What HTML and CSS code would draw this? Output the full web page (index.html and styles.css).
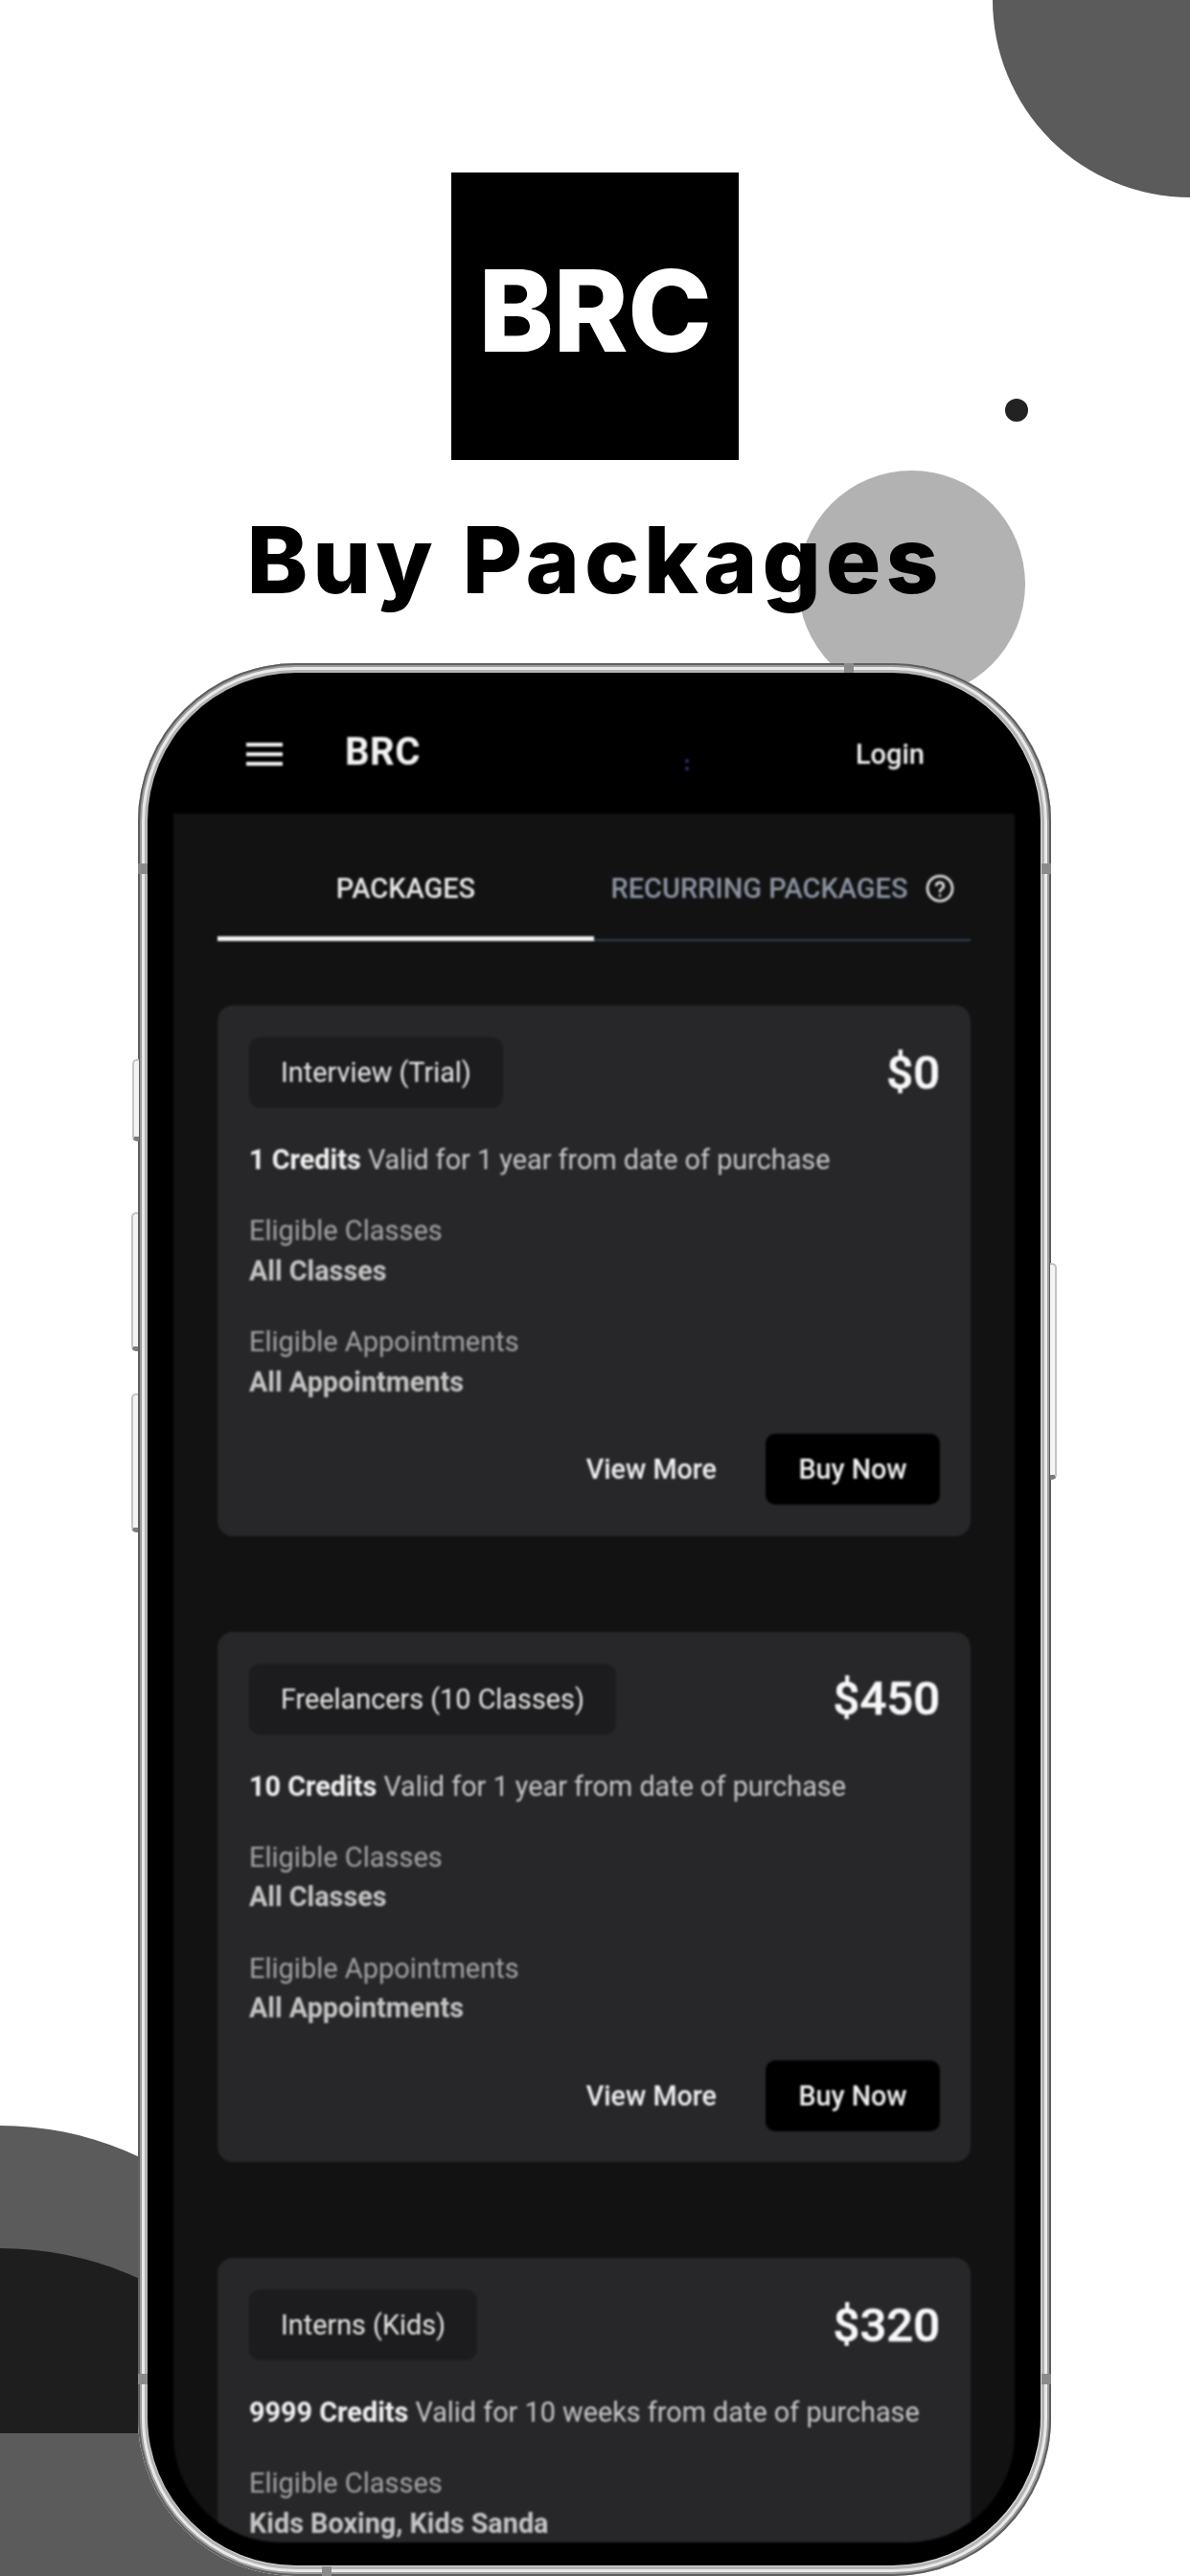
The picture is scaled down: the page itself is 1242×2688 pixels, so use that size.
FILE: index.html
```html
<!DOCTYPE html>
<html lang="en">
<head>
<meta charset="utf-8">
<title>Buy Packages</title>
<link rel="stylesheet" href="styles.css">
</head>
<body>
<div class="page">
  <div class="deco deco-top"></div>
  <div class="deco deco-dot"></div>
  <div class="deco deco-mid"></div>
  <div class="deco deco-bl"></div>
  <div class="deco deco-bl-base"></div>
  <div class="deco deco-bl-dark"></div>

  <header class="hero">
    <div class="logo"><span class="logo-text">BRC</span></div>
    <h1 class="title">Buy Packages</h1>
  </header>

  <div class="phone">
    <span class="btn-side side-a"></span>
    <span class="btn-side side-b"></span>
    <span class="btn-side side-c"></span>
    <span class="btn-side side-r"></span>
    <span class="band band-tl"></span>
    <span class="band band-tr"></span>
    <span class="band band-bl"></span>
    <span class="band band-br"></span>
    <span class="band-h band-top"></span>
    <span class="band-h band-bottom"></span>
    <div class="bezel">
      <div class="topbar">
        <div class="burger"><i></i><i></i><i></i></div>
        <div class="brand">BRC</div>
        <div class="sensor"><i></i><i></i></div>
        <div class="login">Login</div>
      </div>
      <main class="screen">
        <nav class="tabs">
          <div class="tab tab-active">PACKAGES</div>
          <div class="tab">RECURRING PACKAGES
            <svg class="help" viewBox="0 0 24 24" fill="none" stroke="currentColor" stroke-width="2.2" stroke-linecap="round" stroke-linejoin="round"><circle cx="12" cy="12" r="10.4"/><path d="M8.9 9.2a3.2 3.2 0 0 1 6.2 1c0 2.1-3.1 2.5-3.1 4.3"/><path d="M12 18h.01"/></svg>
          </div>
        </nav>

        <section class="card">
          <div class="card-head"><div class="pill">Interview (Trial)</div><div class="price">$0</div></div>
          <p class="credits"><b>1 Credits</b> Valid for 1 year from date of purchase</p>
          <div class="group"><div class="label">Eligible Classes</div><div class="value">All Classes</div></div>
          <div class="group"><div class="label">Eligible Appointments</div><div class="value">All Appointments</div></div>
          <div class="actions"><span class="more">View More</span><span class="buy">Buy Now</span></div>
        </section>

        <section class="card">
          <div class="card-head"><div class="pill">Freelancers (10 Classes)</div><div class="price">$450</div></div>
          <p class="credits"><b>10 Credits</b> Valid for 1 year from date of purchase</p>
          <div class="group"><div class="label">Eligible Classes</div><div class="value">All Classes</div></div>
          <div class="group"><div class="label">Eligible Appointments</div><div class="value">All Appointments</div></div>
          <div class="actions"><span class="more">View More</span><span class="buy">Buy Now</span></div>
        </section>

        <section class="card">
          <div class="card-head"><div class="pill">Interns (Kids)</div><div class="price">$320</div></div>
          <p class="credits"><b>9999 Credits</b> Valid for 10 weeks from date of purchase</p>
          <div class="group"><div class="label">Eligible Classes</div><div class="value">Kids Boxing, Kids Sanda</div></div>
        </section>
      </main>
    </div>
  </div>
</div>
</body>
</html>
```

FILE: styles.css
```css
* { box-sizing: border-box; }
html, body { margin: 0; padding: 0; background: #fff; }
.page {
  position: relative;
  width: 1242px;
  height: 2688px;
  overflow: hidden;
  background: #fff;
  font-family: Roboto, "Liberation Sans", sans-serif;
}

/* decorative background shapes */
.deco { position: absolute; }
.deco-top { left: 1036px; top: -206px; width: 412px; height: 412px; border-radius: 50%; background: #5b5b5b; }
.deco-dot { left: 1049px; top: 416px; width: 24px; height: 24px; border-radius: 50%; background: #222; }
.deco-mid { left: 833px; top: 491px; width: 237px; height: 237px; border-radius: 50%; background: #b2b2b2; }
.deco-bl { left: -340px; top: 2218px; width: 680px; height: 680px; border-radius: 50%; background: #5b5b5b; }
.deco-bl-base { left: 0; top: 2539px; width: 343px; height: 149px; background: #5b5b5b; }
.deco-bl-dark { left: 0; top: 2346px; width: 350px; height: 193px; background: #1e1e1e; clip-path: circle(350px at 0 350px); }

.hero {
  position: relative;
  display: flex;
  flex-direction: column;
  align-items: center;
  padding-top: 180px;
}
.logo {
  width: 300px;
  height: 300px;
  padding-bottom: 13px;
  background: #000;
  color: #fff;
  display: flex;
  align-items: center;
  justify-content: center;
  font-family: Inter, sans-serif;
  font-weight: 800;
  font-size: 118px;
  letter-spacing: -0.5px;
  line-height: 1;
}
.title {
  margin: 45px 0 0;
  height: 118px;
  line-height: 118px;
  color: #000;
  font-family: Inter, sans-serif;
  font-weight: 800;
  font-size: 96px;
  letter-spacing: 5px;
  white-space: nowrap;
}

/* phone */
.phone {
  position: relative;
  width: 953px;
  height: 1996px;
  margin: 49px 0 0 144px;
  padding: 10px 11px 11px 10px;
  border-radius: 165px;
  background: #d8d8d8;
  box-shadow:
    inset 0 0 0 2px #5f5f5f,
    inset 0 0 0 4px #9c9c9c,
    inset 0 0 0 7px #e9e9e9,
    inset 0 0 0 10px #b4b4b4;
}
.btn-side {
  position: absolute;
  width: 7px;
  border: 2px solid #c4c4c4;
  border-bottom: 5px solid #7c7c7c;
  border-right: 0;
  border-radius: 5px 0 0 5px;
  background: #f4f4f4;
}
.side-a { left: -6px; top: 413px; height: 86px; }
.side-b { left: -7px; top: 573px; height: 145px; }
.side-c { left: -7px; top: 762px; height: 145px; }
.side-r {
  right: -6px; top: 626px; height: 226px;
  border-left: 0; border-right: 2px solid #c4c4c4;
  border-radius: 0 5px 5px 0;
}
.band { position: absolute; width: 10px; height: 11px; background: #8a8a8a; }
.band-tl { left: 0; top: 209px; }
.band-tr { right: 0; top: 209px; }
.band-bl { left: 0; top: 1785px; }
.band-br { right: 0; top: 1785px; }
.band-h { position: absolute; width: 10px; height: 10px; background: #8a8a8a; }
.band-top { left: 737px; top: 0; }
.band-bottom { left: 192px; bottom: 0; }

.bezel {
  height: 100%;
  border-radius: 155px;
  background: #000;
  overflow: hidden;
  display: flex;
  flex-direction: column;
}
.topbar {
  position: relative;
  flex: none;
  height: 147px;
  display: flex;
  align-items: center;
  padding: 24px 0 0 103px;
  color: #fff;
  filter: blur(1px);
}
.burger { display: flex; flex-direction: column; gap: 6px; width: 38px; margin-top: -1px; }
.burger i { display: block; height: 4px; background: #f2f2f2; }
.brand { margin-left: 65px; font-size: 40px; font-weight: 700; letter-spacing: 0.5px; color: #f2f2f2; margin-top: -6px; }
.sensor { position: absolute; left: 561px; top: 90px; display: flex; flex-direction: column; gap: 4px; }
.sensor i { display: block; width: 4px; height: 4px; border-radius: 50%; background: #2f2f7a; }
.login { margin-left: auto; margin-right: 121px; font-size: 29px; font-weight: 500; color: #f0f0f0; margin-top: -2px; }

.screen {
  flex: 1;
  min-height: 0;
  margin: 0 27px 24px;
  padding: 0 46px;
  background: #121212;
  border-radius: 0 0 112px 112px;
  overflow: hidden;
  filter: blur(1px);
}
.tabs { display: flex; height: 133px; border-bottom: 2px solid #334155; margin-bottom: 67px; }
.tab {
  flex: 1;
  display: flex;
  align-items: center;
  justify-content: center;
  gap: 18px;
  padding-top: 25px;
  font-size: 29px;
  font-weight: 500;
  color: #8b93a1;
  white-space: nowrap;
}
.tab-active { color: #e6e6e6; border-bottom: 5px solid #f2f2f2; height: 133px; padding-top: 27px; }
.help { width: 30px; height: 30px; color: #dcdcdc; }

.card {
  height: 553.5px;
  margin-bottom: 100px;
  padding: 33px 32px 33px 33px;
  border-radius: 16px;
  background: #27272a;
}
.card-head { display: flex; justify-content: space-between; align-items: center; }
.pill {
  height: 74px;
  display: flex;
  align-items: center;
  padding: 0 33px;
  border-radius: 12px;
  background: #1c1c1e;
  color: #e6e6e6;
  font-size: 28.8px;
}
.price { font-size: 49px; font-weight: 500; color: #f7f7f7; -webkit-text-stroke: 0.6px #f7f7f7; }
.credits { margin: 34px 0 0; line-height: 40px; font-size: 28.8px; color: #c6c6c6; }
.credits b { color: #f0f0f0; font-weight: 700; }
.group { margin-top: 34px; line-height: 41.5px; font-size: 29px; }
.group + .group { margin-top: 33px; }
.label { color: #a3a3a3; }
.value { color: #c4c4c4; font-weight: 700; font-size: 28.8px; }
.actions { margin-top: 33px; display: flex; justify-content: flex-end; align-items: center; gap: 51px; }
.more { color: #f0f0f0; font-size: 28.7px; font-weight: 500; }
.buy {
  width: 182px;
  height: 74px;
  display: flex;
  align-items: center;
  justify-content: center;
  border-radius: 10px;
  background: #000;
  color: #f0f0f0;
  font-size: 28.7px;
  font-weight: 500;
}
```
